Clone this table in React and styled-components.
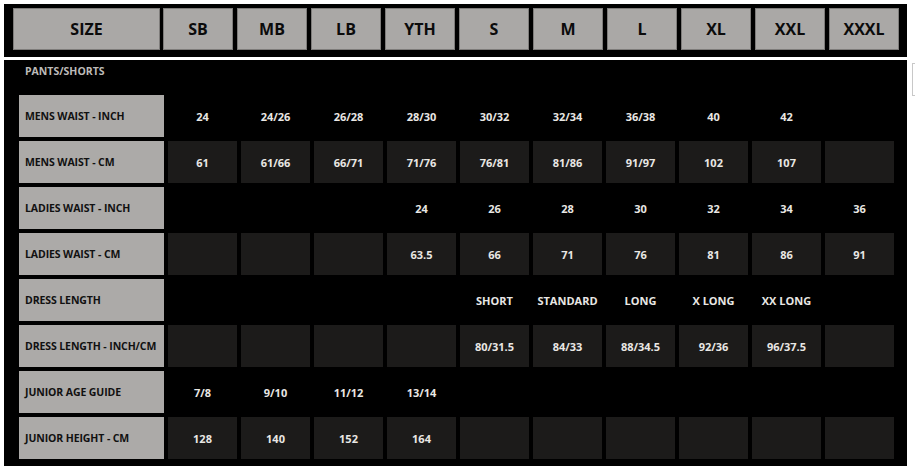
import React from "react";
import styled, { createGlobalStyle } from "styled-components";

const Global = createGlobalStyle`
  html, body { margin: 0; padding: 0; background: #ffffff; }
  body { font-family: "Open Sans", "Liberation Sans", sans-serif; }
`;

const Page = styled.div`
  display: flex;
  align-items: flex-start;
  padding: 4px 0 0 4px;
`;

const Chart = styled.div`
  width: 903px;
  display: flex;
  flex-direction: column;
  gap: 3px;
`;

const HeaderBar = styled.div`
  background: #000;
  display: flex;
  gap: 3px;
  padding: 4px 8px 7px 9px;
`;

const HeaderGroup = styled.div`
  display: flex;
  gap: 4px;
`;

const HeadCell = styled.div`
  width: ${(p) => p.$w}px;
  height: 42px;
  box-sizing: border-box;
  border: 1px solid #7e7c7a;
  background: #aaa8a6;
  color: #0b0b0b;
  font-weight: 700;
  font-size: 16px;
  display: flex;
  align-items: center;
  justify-content: center;
`;

const Body = styled.div`
  background: #000;
  padding: 1px 0 7px 15px;
  display: flex;
  flex-direction: column;
  gap: 14px;
`;

const Section = styled.div`
  height: 20px;
  line-height: 20px;
  padding-left: 6px;
  color: #bdbbb9;
  font-size: 10.5px;
  font-weight: 700;
`;

const Grid = styled.div`
  display: grid;
  grid-template-columns: 145px repeat(10, 69px);
  grid-auto-rows: 42px;
  gap: 4px;
`;

const Label = styled.div`
  background: #acaaa8;
  color: #111;
  font-size: 10.5px;
  font-weight: 700;
  display: flex;
  align-items: center;
  padding-left: 6px;
  letter-spacing: -0.1px;
`;

const Value = styled.div`
  background: ${(p) => (p.$filled ? "#1c1b1a" : "transparent")};
  color: #e9e7e4;
  font-size: 11px;
  font-weight: 700;
  display: flex;
  align-items: center;
  justify-content: center;
`;

const SideBox = styled.div`
  margin: 59px 0 0 5px;
  width: 12px;
  height: 33px;
  box-sizing: border-box;
  border: 1px solid #c8c8c8;
  background: #fff;
  flex-shrink: 0;
`;

const sizes = ["SB", "MB", "LB", "YTH", "S", "M", "L", "XL", "XXL", "XXXL"];

const rows = [
  { label: "MENS WAIST - INCH", filled: false, v: ["24", "24/26", "26/28", "28/30", "30/32", "32/34", "36/38", "40", "42", ""] },
  { label: "MENS WAIST - CM", filled: true, v: ["61", "61/66", "66/71", "71/76", "76/81", "81/86", "91/97", "102", "107", ""] },
  { label: "LADIES WAIST - INCH", filled: false, v: ["", "", "", "24", "26", "28", "30", "32", "34", "36"] },
  { label: "LADIES WAIST - CM", filled: true, v: ["", "", "", "63.5", "66", "71", "76", "81", "86", "91"] },
  { label: "DRESS LENGTH", filled: false, v: ["", "", "", "", "SHORT", "STANDARD", "LONG", "X LONG", "XX LONG", ""] },
  { label: "DRESS LENGTH - INCH/CM", filled: true, v: ["", "", "", "", "80/31.5", "84/33", "88/34.5", "92/36", "96/37.5", ""] },
  { label: "JUNIOR AGE GUIDE", filled: false, v: ["7/8", "9/10", "11/12", "13/14", "", "", "", "", "", ""] },
  { label: "JUNIOR HEIGHT - CM", filled: true, v: ["128", "140", "152", "164", "", "", "", "", "", ""] },
];

export default function App() {
  return (
    <>
      <Global />
      <Page>
        <Chart>
          <HeaderBar>
            <HeadCell $w={147}>SIZE</HeadCell>
            <HeaderGroup>
              {sizes.map((s) => (
                <HeadCell key={s} $w={70}>{s}</HeadCell>
              ))}
            </HeaderGroup>
          </HeaderBar>
          <Body>
            <Section>PANTS/SHORTS</Section>
            <Grid>
              {rows.map((r) => (
                <React.Fragment key={r.label}>
                  <Label>{r.label}</Label>
                  {r.v.map((val, i) => (
                    <Value key={i} $filled={r.filled}>{val}</Value>
                  ))}
                </React.Fragment>
              ))}
            </Grid>
          </Body>
        </Chart>
        <SideBox />
      </Page>
    </>
  );
}
